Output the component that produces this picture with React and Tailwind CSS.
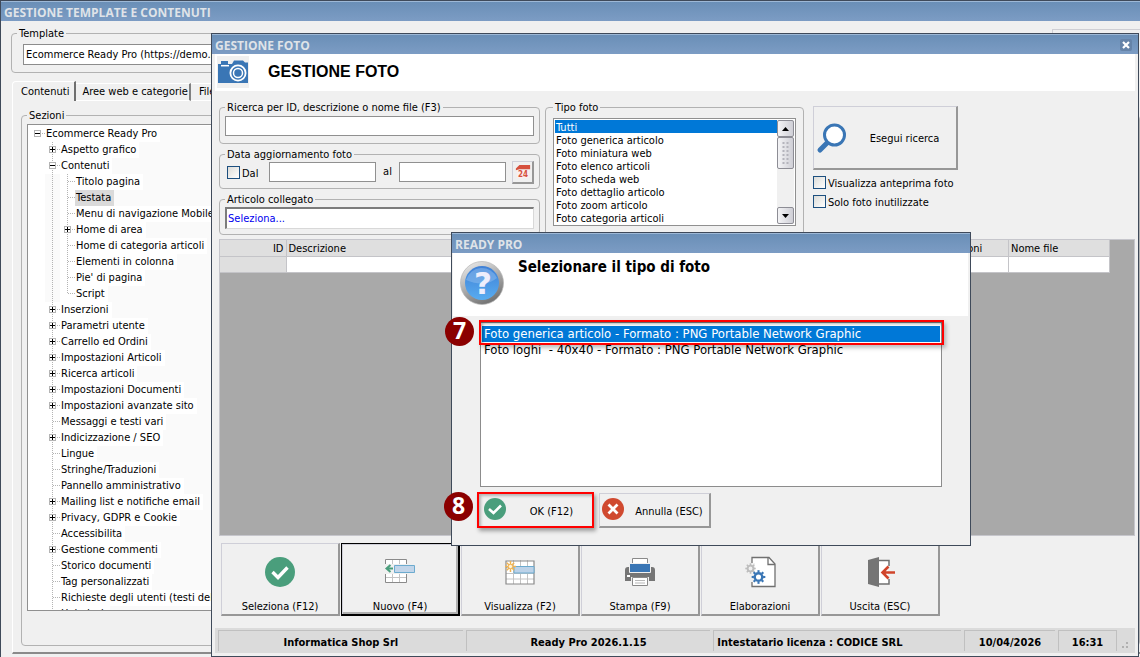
import React from 'react';

const TREE = [
  [0, 'Ecommerce Ready Pro', '-'],
  [1, 'Aspetto grafico', '+'],
  [1, 'Contenuti', '-'],
  [2, 'Titolo pagina', ''],
  [2, 'Testata', '', true],
  [2, 'Menu di navigazione Mobile', ''],
  [2, 'Home di area', '+'],
  [2, 'Home di categoria articoli', ''],
  [2, 'Elementi in colonna', ''],
  [2, "Pie' di pagina", ''],
  [2, 'Script', '', false, true],
  [1, 'Inserzioni', '+'],
  [1, 'Parametri utente', '+'],
  [1, 'Carrello ed Ordini', '+'],
  [1, 'Impostazioni Articoli', '+'],
  [1, 'Ricerca articoli', '+'],
  [1, 'Impostazioni Documenti', '+'],
  [1, 'Impostazioni avanzate sito', '+'],
  [1, 'Messaggi e testi vari', ''],
  [1, 'Indicizzazione / SEO', '+'],
  [1, 'Lingue', ''],
  [1, 'Stringhe/Traduzioni', ''],
  [1, 'Pannello amministrativo', ''],
  [1, 'Mailing list e notifiche email', '+'],
  [1, 'Privacy, GDPR e Cookie', '+'],
  [1, 'Accessibilita', ''],
  [1, 'Gestione commenti', '+'],
  [1, 'Storico documenti', ''],
  [1, 'Tag personalizzati', ''],
  [1, 'Richieste degli utenti (testi delle email)', ''],
  [1, 'Helpdesk', ''],
];

const PHOTO_TYPES = [
  'Tutti',
  'Foto generica articolo',
  'Foto miniatura web',
  'Foto elenco articoli',
  'Foto scheda web',
  'Foto dettaglio articolo',
  'Foto zoom articolo',
  'Foto categoria articoli',
];

function TitleBar({ title, children }) {
  return (
    <div className="flex h-5 shrink-0 items-center justify-between border-t border-[#9db8d6] bg-linear-to-b from-[#6a8fb7] to-[#7c9cc4] pr-1.5 pl-[3px]">
      <span className="pt-[3px] font-['Open_Sans','Noto_Sans',sans-serif] text-[12px] leading-4 font-bold whitespace-nowrap text-[#dfe3e8]">
        {title}
      </span>
      {children}
    </div>
  );
}

function Group({ label, className = '', children }) {
  return (
    <fieldset className={'min-w-0 rounded-[4px] border border-[#b2b2b2] px-[5px] ' + className}>
      <legend className="px-0.5 pt-0.5 leading-3 whitespace-nowrap">{label}</legend>
      {children}
    </fieldset>
  );
}

function TreeMark({ mark, last, root }) {
  return (
    <svg className="h-4 w-[15px] shrink-0" viewBox="0 0 15 16" shapeRendering="crispEdges" aria-hidden="true">
      {!root && <path d={last ? 'M7.5 0V8' : 'M7.5 0V16'} stroke="#b4b4b4" strokeDasharray="1 1" />}
      <path d="M8 7.5H15" stroke="#b4b4b4" strokeDasharray="1 1" />
      {mark && (
        <>
          <rect x="4.5" y="4.5" width="6" height="6" fill="#fff" stroke="#b4b4b4" />
          <path d="M5 7.5H10" stroke="#000" />
          {mark === '+' && <path d="M7.5 5V10" stroke="#000" />}
        </>
      )}
    </svg>
  );
}

function TreeRow({ item }) {
  const [level, text, mark, selected, last] = item;
  return (
    <li role="treeitem" aria-selected={!!selected} className="flex h-4 pl-0.5">
      {level > 0 && <span className="w-[15px] shrink-0" />}
      <span className="flex min-w-0 grow">
        {level > 1 && (
          <svg className="h-4 w-[15px] shrink-0 bg-[#fafafa]" viewBox="0 0 15 16" shapeRendering="crispEdges" aria-hidden="true">
            <path d="M7.5 0V16" stroke="#b4b4b4" strokeDasharray="1 1" />
          </svg>
        )}
        <TreeMark mark={mark} last={last} root={level === 0} />
        <span className="flex grow bg-[#fafafa]">
          <span className={'pr-[3px] pl-px leading-4 whitespace-nowrap ' + (selected ? 'bg-[#dadada]' : 'bg-white')}>{text}</span>
        </span>
      </span>
    </li>
  );
}

function Check({ label }) {
  return (
    <label className="flex items-center gap-0.5 leading-[13px] whitespace-nowrap">
      <input
        type="checkbox"
        className="size-[13px] shrink-0 appearance-none border border-[#1c4f7f] bg-linear-to-br from-[#dcdcd8] to-white"
      />
      <span className="-mb-0.5">{label}</span>
    </label>
  );
}

const BEVEL = 'border border-r-2 border-b-2 border-t-[#cfcfd8] border-l-[#cfcfd8] border-r-[#979797] border-b-[#979797] bg-[#f0f0f0]';

function Tool({ label, active, children }) {
  return (
    <button
      className={
        'flex h-[73px] w-[119px] flex-col items-center pt-3 ' +
        (active ? 'border border-r-2 border-b-2 border-black bg-[#f0f0f0] shadow-[inset_1px_1px_0_#cfcfd8,inset_-2px_-2px_0_#b0b0b0]' : BEVEL)
      }
    >
      <svg className="size-8 shrink-0" viewBox="0 0 32 32" aria-hidden="true">
        {children}
      </svg>
      <span className="mt-[13px] leading-3 whitespace-nowrap">{label}</span>
    </button>
  );
}

function GridIcon() {
  return (
    <>
      <path d="M2 5H30V28H2Z" fill="#fff" />
      <path d="M2 11.5H30M2 17.5H30M2 23H30M9.5 4V28M16.5 4V28M23.5 4V28" stroke="#c4c4c4" fill="none" />
      <path d="M2 5H30V28H2Z" fill="none" stroke="#8a8a8a" strokeWidth="1.2" />
    </>
  );
}

function Badge({ children }) {
  return (
    <span className="flex size-[29px] items-center justify-center rounded-full bg-[#8b0000] pb-[3px] font-['Open_Sans','Noto_Sans',sans-serif] text-[23px] leading-none font-bold text-white">
      {children}
    </span>
  );
}

function Gear({ cx, cy, r, color }) {
  const teeth = [0, 45, 90, 135, 180, 225, 270, 315];
  return (
    <g stroke={color} fill="none">
      <circle cx={cx} cy={cy} r={r} strokeWidth={r * 0.65} />
      {teeth.map((angle) => (
        <path
          key={angle}
          d={`M${cx} ${cy - r * 1.2}V${cy - r * 1.8}`}
          strokeWidth={r * 0.55}
          transform={`rotate(${angle} ${cx} ${cy})`}
        />
      ))}
    </g>
  );
}

function ArrowButton({ up }) {
  return (
    <button
      aria-label={up ? 'Scorri su' : 'Scorri giù'}
      className="flex h-[17px] w-full shrink-0 items-center justify-center rounded-xs border border-[#8d8d95] bg-linear-to-r from-[#f4f4f6] to-[#cfcfd6]"
    >
      <svg className="h-1 w-[7px]" viewBox="0 0 7 4" aria-hidden="true">
        <path d={up ? 'M3.5 0L7 4H0Z' : 'M0 0H7L3.5 4Z'} />
      </svg>
    </button>
  );
}

function BackWindow() {
  return (
    <section className="flex h-full flex-col border-t border-l border-[#3f4a5a]">
      <TitleBar title="GESTIONE TEMPLATE E CONTENUTI" />
      <div className="flex grow flex-col pl-2.5">
        <div className="flex items-start justify-between pt-[5px]">
          <Group label="Template" className="h-[47px] w-[518px]">
            <div className="mx-1.5 mt-1">
              <select
                aria-label="Template"
                className="block h-[21px] w-full appearance-none border border-[#8c8c8c] bg-white px-0.5 whitespace-nowrap"
              >
                <option>Ecommerce Ready Pro (https://demo.readypro.it)</option>
              </select>
            </div>
          </Group>
          <div className="mt-[3px] h-8 w-[88px] border-t border-l border-[#cfcfd4]" />
        </div>
        <div className="mt-2 flex h-5 items-start pl-px" role="tablist">
          <button
            role="tab"
            aria-selected="true"
            className="h-5 rounded-tl-sm border-t border-r-2 border-l border-t-white border-r-[#6f6f6f] border-l-white pr-[5px] pl-2 whitespace-nowrap"
          >
            Contenuti
          </button>
          <button
            role="tab"
            aria-selected="false"
            className="mt-0.5 h-[18px] border-t border-r-2 border-b border-t-white border-r-[#808080] border-b-white pr-px pl-1.5 whitespace-nowrap"
          >
            Aree web e categorie
          </button>
          <button role="tab" aria-selected="false" className="mt-0.5 h-[18px] border-t border-b border-white px-2 whitespace-nowrap">
            File
          </button>
        </div>
        <div className="ml-px flex min-h-0 grow basis-0 flex-col border-b-2 border-l border-b-[#8a8a8a] border-l-white pt-[7px] pb-1.5 pl-2">
          <Group label="Sezioni" className="flex min-h-0 grow basis-0 flex-col pb-[34px]">
            <ul role="tree" className="mt-0.5 min-h-0 grow basis-0 overflow-hidden border border-[#909090] bg-white pt-px">
              {TREE.map((item) => (
                <TreeRow key={item[1]} item={item} />
              ))}
            </ul>
          </Group>
        </div>
        <div className="h-[3px] shrink-0" />
      </div>
    </section>
  );
}

function PhotoWindow() {
  return (
    <section className="absolute top-[33px] right-px bottom-0 left-[211px] flex flex-col border border-[#3f4a5a] bg-[#f0f0f0]">
      <TitleBar title="GESTIONE FOTO">
        <button aria-label="Chiudi" className="flex size-3 items-center justify-center rounded-xs bg-[#6583a8]">
          <svg className="size-2" viewBox="0 0 8 8" aria-hidden="true">
            <path d="M1 1L7 7M7 1L1 7" stroke="#fff" strokeWidth="2.2" />
          </svg>
        </button>
      </TitleBar>

      <div className="flex min-h-0 grow flex-col px-[3px]">
        <header className="flex h-[37px] shrink-0 items-center bg-white pb-0.5 pl-0.5">
          <svg className="size-8 shrink-0 bg-[#f0f0f0]" viewBox="0 0 32 32" aria-hidden="true">
            <path d="M1 8H15L17 4.5H26L28 6.5H31V27H1Z" fill="#3a76b5" />
            <path d="M4 5H11V8H4Z" fill="#3a76b5" />
            <path d="M4 9.7H12" stroke="#fff" strokeWidth="1.5" />
            <circle cx="21" cy="17" r="7.6" fill="#3a76b5" stroke="#fff" strokeWidth="1.8" />
            <circle cx="21" cy="17" r="4.5" fill="none" stroke="#fff" strokeWidth="1.5" />
          </svg>
          <h1 className="ml-[19px] font-['Liberation_Sans',Arial,sans-serif] text-[16px] leading-5 font-bold">GESTIONE FOTO</h1>
        </header>

        <div className="flex h-[148px] shrink-0 items-start gap-[5px] pt-[9px] pl-1">
          <div className="flex w-[321px] flex-col gap-[3px]">
            <Group label="Ricerca per ID, descrizione o nome file (F3)" className="h-[44px]">
              <input aria-label="Ricerca" className="mt-0.5 block h-5 w-full border border-[#909090] bg-white px-1" />
            </Group>
            <Group label="Data aggiornamento foto" className="h-[42px]">
              <div className="flex h-[22px] items-center pl-0.5">
                <div className="w-[42px]">
                  <Check label="Dal" />
                </div>
                <input aria-label="Dal giorno" className="h-5 w-[107px] border border-[#909090] bg-white px-1" />
                <span className="w-[23px] text-center">al</span>
                <input aria-label="Al giorno" className="h-5 w-[107px] border border-[#909090] bg-white px-1" />
                <button aria-label="Calendario" className={'ml-1.5 flex h-[23px] w-[22px] shrink-0 items-center justify-center ' + BEVEL}>
                  <svg className="size-4" viewBox="0 0 18 18" aria-hidden="true">
                    <path d="M1 5L5 1H17V6H5L1 7Z" fill="#d6503e" />
                    <path d="M2 7H16V16H2Z" fill="#fbeeee" />
                    <text x="9" y="15" textAnchor="middle" fontSize="9" fontWeight="700" fill="#d6503e">24</text>
                  </svg>
                </button>
              </div>
            </Group>
            <Group label="Articolo collegato" className="h-[43px]">
              <select
                aria-label="Articolo collegato"
                className="mt-px block h-[22px] w-full appearance-none border border-t-2 border-l-2 border-t-[#7c7c7c] border-r-[#d8d8d8] border-b-[#d8d8d8] border-l-[#7c7c7c] bg-white pl-px text-[#0000ee]"
              >
                <option>Seleziona...</option>
              </select>
            </Group>
          </div>

          <Group label="Tipo foto" className="h-[141px] w-[259px] px-[7px]">
            <div className="mt-1 flex h-[108px] border border-[#909090] bg-white p-px">
              <ul role="listbox" aria-label="Tipo foto" className="min-w-0 grow">
                {PHOTO_TYPES.map((type, i) => (
                  <li
                    key={type}
                    role="option"
                    aria-selected={i === 0}
                    className={'h-[13px] pt-px pl-px leading-[13px] whitespace-nowrap ' + (i === 0 ? 'bg-[#0078d7] text-white' : '')}
                  >
                    {type}
                  </li>
                ))}
              </ul>
              <div className="flex w-[17px] flex-col bg-[#f0f0f0]">
                <ArrowButton up />
                <div className="flex h-8 items-center justify-center rounded-xs border border-[#8d8d95] bg-linear-to-r from-[#f4f4f6] to-[#cfcfd6]">
                  <svg className="h-[22px] w-2" viewBox="0 0 8 22" aria-hidden="true">
                    <path d="M1.5 0V22M5.500 0V22" stroke="#b4b4bc" strokeWidth="2" strokeDasharray="2 2" />
                  </svg>
                </div>
                <span className="grow" />
                <ArrowButton />
              </div>
            </div>
          </Group>

          <div className="ml-1 flex flex-col gap-1.5 pt-1.5">
            <button className={'flex h-16 w-[145px] items-center pl-0.5 ' + BEVEL}>
              <svg className="size-8 shrink-0" viewBox="0 0 32 32" aria-hidden="true">
                <path d="M4 28L12 20" stroke="#3a76b5" strokeWidth="5" strokeLinecap="round" />
                <circle cx="18.5" cy="13" r="10" fill="#fff" stroke="#3a76b5" strokeWidth="3" />
              </svg>
              <span className="grow pt-[3px] pl-[5px] text-center whitespace-nowrap">Esegui ricerca</span>
            </button>
            <Check label="Visualizza anteprima foto" />
            <Check label="Solo foto inutilizzate" />
          </div>
        </div>

        <div className="ml-1 min-h-0 grow border border-[#c6c6cc] bg-[#a9a9a9]">
          <table className="w-[890px] table-fixed border-collapse">
            <thead>
              <tr className="h-4 bg-[#dfdfdf] text-left">
                <th className="h-4 w-[66px] border border-t-0 border-l-0 border-[#c4c4c8] pt-px pr-0.5 pb-0 text-right leading-[15px] font-normal">ID</th>
                <th className="border border-t-0 border-[#c4c4c8] pt-px pl-0.5 leading-[15px] font-normal">Descrizione</th>
                <th className="w-[84px] border border-t-0 border-[#c4c4c8] pt-px pl-0.5 leading-[15px] font-normal">Dimensioni</th>
                <th className="w-[101px] border border-t-0 border-[#c4c4c8] pt-px pl-0.5 leading-[15px] font-normal">Nome file</th>
              </tr>
            </thead>
            <tbody>
              <tr className="h-4 bg-white">
                <td className="h-4 border border-l-0 border-[#c4c4c8] bg-[#dfdfdf]" />
                <td className="border border-[#c4c4c8]" />
                <td className="border border-[#c4c4c8]" />
                <td className="border border-[#c4c4c8]" />
              </tr>
            </tbody>
          </table>
        </div>

        <div className="flex shrink-0 gap-px py-[7px] pb-3 pl-1.5">
          <Tool label="Seleziona (F12)">
            <circle cx="16" cy="16" r="15" fill="#4a9e7c" />
            <path d="M8.500 16L14 21.500L23.500 11.500" fill="none" stroke="#fff" strokeWidth="3.4" />
          </Tool>
          <Tool label="Nuovo (F4)" active>
            <g transform="translate(-1 -1)">
              <path d="M2.500 4.500H23.500V27.500H2.500Z" fill="#fff" />
              <path d="M2 22.500H24M9.500 5V28M16.500 5V28" stroke="#c4c4c4" fill="none" />
              <path d="M2.500 4.500H23.500V27.500H2.500Z" fill="none" stroke="#8a8a8a" />
              <path d="M1 9H25V19H1Z" fill="#f0f0f0" />
              <path d="M10 13.5H4M7.500 10L3.500 13.500L7.500 17" fill="none" stroke="#4a9e7c" strokeWidth="2" />
              <path d="M11.500 10.500H31.500V17.500H11.500Z" fill="#c2d5e9" stroke="#6cabcf" />
            </g>
          </Tool>
          <Tool label="Visualizza (F2)">
            <GridIcon />
            <path d="M10 10.5H30V17H10Z" fill="#bcd2e8" stroke="#6cabcf" />
            <path d="M6.500 5V16M1 10.500H12M2.800 6.800L10.200 14.200M10.200 6.800L2.800 14.200" stroke="#f0b352" strokeWidth="1.5" />
            <circle cx="6.5" cy="10.5" r="2.2" fill="#fff3d8" stroke="#f0b352" />
          </Tool>
          <Tool label="Stampa (F9)">
            <path d="M1 14Q1 11 4 11H5V8H27V11H28Q31 11 31 14V25H1Z" fill="#757575" />
            <path d="M8.500 2.500H23.500V9H8.500Z" fill="#fff" stroke="#8a8a8a" />
            <path d="M5.500 7.500H26.500V16.500H5.500Z" fill="#3a76b5" stroke="#f0f0f0" />
            <path d="M7 21H25V26H7Z" fill="#f0f0f0" />
            <path d="M8.500 21.500H23.500V29.500H8.500Z" fill="#fff" stroke="#8a8a8a" />
            <path d="M11 24.500H21M11 27H21" stroke="#b8b8b8" />
            <path d="M3 20H6" stroke="#fff" strokeWidth="2" />
          </Tool>
          <Tool label="Elaborazioni">
            <path d="M8 1.500H25L31 8V30.500H8Z" fill="#fff" stroke="#707070" strokeWidth="1.3" />
            <path d="M24 1.500V8.500H31" fill="none" stroke="#707070" strokeWidth="1.3" />
            <path d="M1 7H11V26H1Z" fill="#f0f0f0" />
            <Gear cx={6.5} cy={12.500} r={2.900} color="#bdbdbd" />
            <Gear cx={14.500} cy={21} r={3.800} color="#3a76b5" />
          </Tool>
          <Tool label="Uscita (ESC)">
            <path d="M15 4.500H25V28H15" fill="#fff" stroke="#707070" strokeWidth="1.5" />
            <path d="M4 4L15 1V31L4 28Z" fill="#757575" />
            <path d="M24 10H27V23H24Z" fill="#f0f0f0" />
            <path d="M31 16.500H19M24.500 10.500L18.500 16.500L24.500 22.500" fill="none" stroke="#d0452b" strokeWidth="2.6" />
          </Tool>
        </div>

        <footer className="mb-[3px] flex h-[25px] shrink-0 gap-[3px] bg-[#dbdbdb] py-0.5 pr-[3px] pl-[3px] text-center font-bold">
          <span className="grow basis-0 truncate border-t border-l border-[#c0c0c0] pt-px leading-[21px]">Informatica Shop Srl</span>
          <span className="grow basis-0 truncate border-t border-l border-[#c0c0c0] pt-px leading-[21px]">Ready Pro 2026.1.15</span>
          <span className="grow basis-0 truncate border-t border-l border-[#c0c0c0] pt-px pl-[3px] text-left leading-[21px]">
            Intestatario licenza : CODICE SRL
          </span>
          <span className="w-[91px] border-t border-l border-[#c0c0c0] pt-px leading-[21px]">10/04/2026</span>
          <span className="w-[59px] border-t border-r border-l border-[#c0c0c0] pt-px leading-[21px]">16:31</span>
          <svg className="mt-2 h-3 w-3" viewBox="0 0 12 12" aria-hidden="true">
            <path d="M2 8H4V10H2ZM6 8H8V10H6ZM6 4H8V6H6Z" fill="#b0b0b0" />
          </svg>
        </footer>
      </div>
    </section>
  );
}

function TypeDialog() {
  return (
    <section
      role="dialog"
      aria-label="Selezionare il tipo di foto"
      className="absolute top-[232px] left-[451px] flex h-[314px] w-[520px] flex-col border border-[#3f4a5a] bg-[#f0f0f0]"
    >
      <TitleBar title="READY PRO" />
      <div className="mr-0.5 ml-px flex h-[63px] shrink-0 bg-white pt-1.5 pl-1.5">
        <svg className="mt-0.5 size-[46px] shrink-0" viewBox="0 0 46 46" aria-hidden="true">
          <defs>
            <linearGradient id="rim" x1="0" y1="0" x2="0.5" y2="1">
              <stop offset="0" stopColor="#f4f4f4" />
              <stop offset="1" stopColor="#777" />
            </linearGradient>
            <linearGradient id="ball" x1="0" y1="0" x2="0" y2="1">
              <stop offset="0" stopColor="#3f80d6" />
              <stop offset="1" stopColor="#58acf0" />
            </linearGradient>
          </defs>
          <circle cx="23" cy="22" r="21.5" fill="url(#rim)" stroke="#b5b5b5" strokeWidth="0.7" />
          <circle cx="23" cy="22" r="17" fill="url(#ball)" />
          <path d="M7 19A16.500 16.500 0 0 1 38 17Q26 27 7 19Z" fill="#9ac4f0" opacity="0.45" />
          <text x="24" y="33" textAnchor="middle" fontSize="31" fontWeight="700" fontFamily="DejaVu Sans, sans-serif" fill="#eeeefc">
            ?
          </text>
        </svg>
        <h2 className="ml-[13px] text-[15px] leading-4 font-bold whitespace-nowrap">Selezionare il tipo di foto</h2>
      </div>
      <ul
        role="listbox"
        aria-label="Tipi disponibili"
        className="mt-[5px] mr-7 ml-7 min-h-0 grow border border-t-2 border-[#8c8c8c] bg-white px-px pt-[3px] text-[13px]"
      >
        <li role="option" aria-selected="true" className="bg-[#0078d7] pl-0.5 leading-4 whitespace-pre text-white">
          Foto generica articolo - Formato : PNG Portable Network Graphic
        </li>
        <li role="option" aria-selected="false" className="pl-0.5 leading-4 whitespace-pre">
          {'Foto loghi  - 40x40 - Formato : PNG Portable Network Graphic'}
        </li>
      </ul>
      <div className="flex shrink-0 gap-[5px] pt-[5px] pb-[17px] pl-[25px]">
        <button className="flex h-9 w-[117px] items-center border-2 border-[#ff0000] bg-[#f0f0f0] pl-1 shadow-[2px_3px_4px_rgba(0,0,0,0.35),inset_2px_2px_3px_rgba(0,0,0,0.25)]">
          <svg className="mb-[3px] size-6 shrink-0" viewBox="0 0 24 24" aria-hidden="true">
            <circle cx="12" cy="12" r="11" fill="#4a9e7c" />
            <path d="M6 12L10.500 16L18 8.500" fill="none" stroke="#fff" strokeWidth="2.6" />
          </svg>
          <span className="grow pt-[3px] pl-1 text-center whitespace-nowrap">OK (F12)</span>
        </button>
        <button className={'mt-px flex h-[35px] w-[112px] items-center pl-px ' + BEVEL}>
          <svg className="mb-[3px] size-6 shrink-0" viewBox="0 0 24 24" aria-hidden="true">
            <circle cx="12" cy="12" r="11" fill="#d04a30" />
            <path d="M7.500 7.500L16.500 16.500M16.500 7.500L7.500 16.500" stroke="#fff" strokeWidth="2.8" />
          </svg>
          <span className="grow pt-[3px] pl-1 text-center whitespace-nowrap">Annulla (ESC)</span>
        </button>
      </div>
      <div className="pointer-events-none absolute top-[87px] right-[26px] left-[27px] h-[25px] border-2 border-[#ff0000] shadow-[2px_3px_4px_rgba(0,0,0,0.25),inset_2px_2px_3px_rgba(0,0,0,0.3)]" />
      <div className="absolute top-[84px] left-[-7px]">
        <Badge>7</Badge>
      </div>
      <div className="absolute top-[259px] left-[-8px]">
        <Badge>8</Badge>
      </div>
    </section>
  );
}

export default function App() {
  return (
    <main className="relative h-screen w-full overflow-hidden bg-[#f0f0f0] font-['DejaVu_Sans_Condensed','Noto_Sans',sans-serif] text-[11px] leading-4 text-black">
      <BackWindow />
      <PhotoWindow />
      <TypeDialog />
    </main>
  );
}
